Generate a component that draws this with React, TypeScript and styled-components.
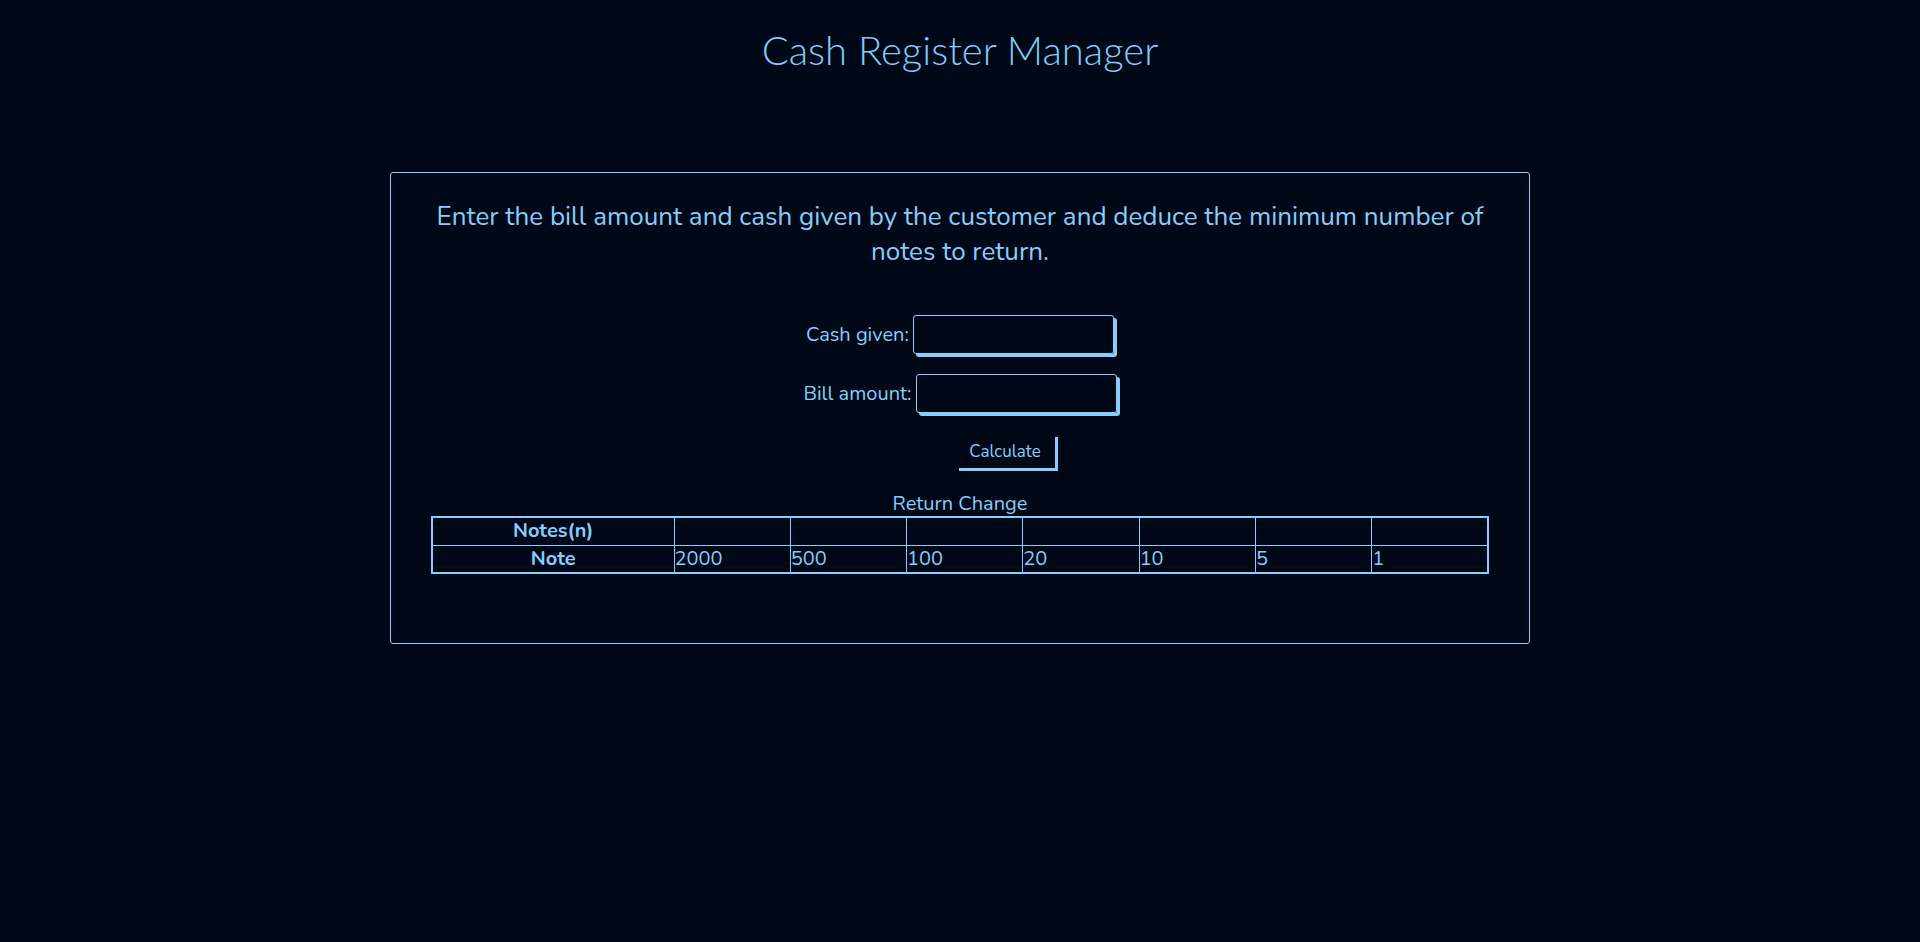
import React from "react";
import styled, { createGlobalStyle } from "styled-components";

const Global = createGlobalStyle`
  html, body { margin: 0; padding: 0; background: #000817; }
  body { font-family: "Nunito", "Lato", "Noto Sans", sans-serif; color: #87cefa; }
  * { box-sizing: border-box; }
`;

const Page = styled.div`
  min-height: 942px;
  background: #000817;
  display: flex;
  flex-direction: column;
  align-items: center;
`;

const Title = styled.h1`
  margin: 0;
  padding-top: 24px;
  font-family: "Lato", sans-serif;
  font-weight: 300;
  font-size: 40px;
  line-height: 52px;
  color: #7fcdf8;
`;

const Card = styled.main`
  margin-top: 96px;
  width: 1140px;
  height: 472px;
  border: 1px solid #87cefa;
  border-radius: 3px;
  padding: 26px 40px 0;
  display: flex;
  flex-direction: column;
  align-items: center;
`;

const Intro = styled.p`
  margin: 0;
  font-size: 26px;
  line-height: 35px;
  text-align: center;
`;

const Row = styled.div<{ $offset?: number }>`
  display: flex;
  align-items: center;
  justify-content: center;
  gap: 4px;
  margin-top: ${(p) => p.$offset ?? 0}px;
`;

const Label = styled.label`
  font-size: 20px;
`;

const Input = styled.input`
  width: 201px;
  height: 39px;
  background: transparent;
  border: 1px solid #87cefa;
  border-radius: 3px;
  box-shadow: 3px 3px 0 #87cefa;
  color: #87cefa;
  font-size: 18px;
  outline: none;
  padding: 0 8px;
`;

const Button = styled.button`
  margin-left: 90px;
  width: 99px;
  height: 34px;
  background: transparent;
  border: none;
  box-shadow: 3px 3px 0 #87cefa;
  color: #87cefa;
  font-family: "Nunito", "Lato", "Noto Sans", sans-serif;
  font-size: 17px;
  padding: 0;
  cursor: pointer;
`;

const Caption = styled.div`
  margin-top: 24px;
  font-size: 20px;
  line-height: 24px;
`;

const Table = styled.table`
  width: 1058px;
  table-layout: fixed;
  border-collapse: collapse;
  border: 2px solid #87cefa;
  font-size: 20px;
`;

const Th = styled.th`
  border: 1px solid #87cefa;
  padding: 0;
  height: 28px;
  font-weight: 700;
  text-align: center;
  line-height: 24px;
`;

const Td = styled.td`
  border: 1px solid #87cefa;
  padding: 0;
  height: 28px;
  text-align: left;
  line-height: 24px;
`;

const notes = [2000, 500, 100, 20, 10, 5, 1];

export default function App() {
  return (
    <>
      <Global />
      <Page>
        <Title>Cash Register Manager</Title>
        <Card>
          <Intro>
            Enter the bill amount and cash given by the customer and deduce the minimum number of notes to return.
          </Intro>
          <Row $offset={46}>
            <Label htmlFor="cash">Cash given:</Label>
            <Input id="cash" type="number" />
          </Row>
          <Row $offset={20}>
            <Label htmlFor="bill">Bill amount:</Label>
            <Input id="bill" type="number" />
          </Row>
          <Row $offset={21}>
            <Button>Calculate</Button>
          </Row>
          <Caption>Return Change</Caption>
          <Table>
            <colgroup>
              <col style={{ width: 242 }} />
              {notes.map((n) => (
                <col key={n} />
              ))}
            </colgroup>
            <tbody>
              <tr>
                <Th>Notes(n)</Th>
                {notes.map((n) => (
                  <Td key={n}></Td>
                ))}
              </tr>
              <tr>
                <Th>Note</Th>
                {notes.map((n) => (
                  <Td key={n}>{n}</Td>
                ))}
              </tr>
            </tbody>
          </Table>
        </Card>
      </Page>
    </>
  );
}
